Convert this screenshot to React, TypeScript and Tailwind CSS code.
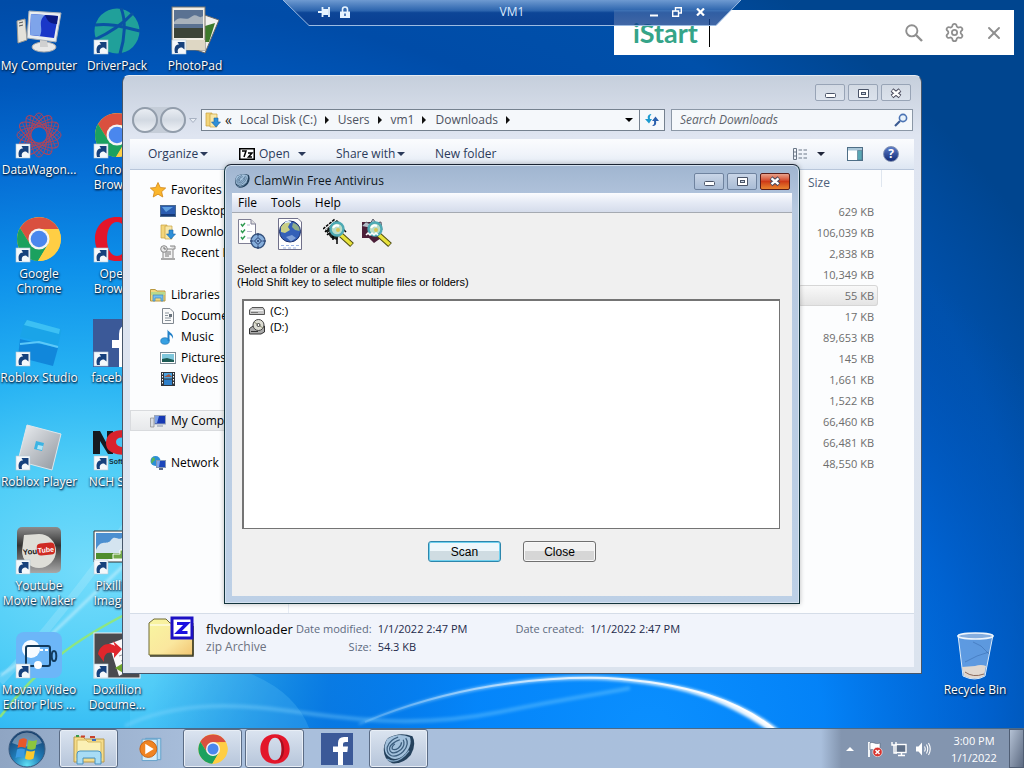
import React from "react";
import { Settings, X } from "lucide-react";

const UI = "font-['Open_Sans','Noto_Sans',sans-serif]";

function Wallpaper() {
  return (
    <svg className="absolute inset-0 h-full w-full" viewBox="0 0 1024 768" preserveAspectRatio="none" aria-hidden="true">
      <defs>
        <radialGradient id="sky" gradientUnits="userSpaceOnUse" cx="0" cy="0" r="1" gradientTransform="translate(90 570) scale(1050 760)">
          <stop offset="0" stopColor="#74dcfb" />
          <stop offset="0.14" stopColor="#4fcdf7" />
          <stop offset="0.26" stopColor="#26b2f3" />
          <stop offset="0.4" stopColor="#0d90ea" />
          <stop offset="0.52" stopColor="#0670d6" />
          <stop offset="0.64" stopColor="#0058bc" />
          <stop offset="0.75" stopColor="#004ca8" />
          <stop offset="0.88" stopColor="#0050aa" />
          <stop offset="1" stopColor="#00458f" />
        </radialGradient>
        <radialGradient id="glow" gradientUnits="userSpaceOnUse" cx="0" cy="0" r="1" gradientTransform="translate(650 740) scale(500 560)">
          <stop offset="0" stopColor="#0b90ff" />
          <stop offset="0.35" stopColor="#0485fb" stopOpacity="0.95" />
          <stop offset="0.65" stopColor="#0069de" stopOpacity="0.75" />
          <stop offset="1" stopColor="#0058c4" stopOpacity="0" />
        </radialGradient>
        <linearGradient id="swoosh" x1="0" x2="1">
          <stop offset="0" stopColor="#fff" stopOpacity="0.15" />
          <stop offset="0.5" stopColor="#fff" stopOpacity="0.7" />
          <stop offset="1" stopColor="#fff" />
        </linearGradient>
        <filter id="soft" x="-10%" y="-10%" width="120%" height="120%">
          <feGaussianBlur stdDeviation="1.5" />
        </filter>
      </defs>
      <rect width="1024" height="768" fill="url(#sky)" />
      <rect width="1024" height="768" fill="url(#glow)" />
      <path d="M200 660Q290 675 310 730H130V660Z" fill="#7fe0ff" opacity=".18" />
      <path d="M359 724C450 685 540 674 607 677C690 682 740 700 779 730L768 730C720 698 680 685 607 680C540 677 450 688 359 724Z" fill="url(#swoosh)" stroke="#9fe0ff" strokeOpacity=".5" filter="url(#soft)" />
      <path d="M365 722C450 686 540 676 607 678C690 683 740 702 774 729" fill="none" stroke="url(#swoosh)" strokeWidth="2" />
      <path d="M125 726C170 704 225 702 290 711S420 728 500 712S590 696 630 688" fill="none" stroke="#8fdcff" strokeWidth="4" opacity=".35" filter="url(#soft)" />
      <path d="M0 717C40 665 75 640 130 612" fill="none" stroke="#97e96c" strokeWidth="2.5" opacity=".85" />
      <path d="M0 675C30 660 75 610 130 560" fill="none" stroke="#fff" strokeWidth="2" opacity=".6" filter="url(#soft)" />
      <path d="M0 682C40 640 80 590 130 520" fill="none" stroke="#fff" strokeWidth="8" opacity=".15" />
    </svg>
  );
}

function ChromeArt() {
  return (
    <g>
      <circle cx="24" cy="23" r="22" fill="#fbd04b" />
      <path d="M5 12A22 22 0 0 1 43.5 13H24L15 28Z" fill="#d9503f" />
      <path d="M5 12A22 22 0 0 0 23 45L33 28H24L15 28Z" fill="#1ba15f" />
      <path d="M23 45L33.5 28L33 13H43.3A22 22 0 0 1 23 45Z" fill="#ffce44" />
      <circle cx="24" cy="23" r="10.5" fill="#f4f4f4" />
      <circle cx="24" cy="23" r="8.3" fill="#4a87ee" />
    </g>
  );
}

function OperaArt() {
  return (
    <g>
      <path fillRule="evenodd" fill="#e3162a" d="M24 1C10 1 2 11 2 23S10 45 24 45S46 35 46 23S38 1 24 1ZM24 6C30 6 34 13 34 23S30 40 24 40S14 33 14 23S18 6 24 6Z" />
      <path d="M28 5.500C40 8 42 38 28 40.500C36 36 36 10 28 5.500Z" fill="#a80f1e" />
    </g>
  );
}

type DeskItem = { name: string; lines: string[]; art: React.ReactNode; shortcut?: boolean };

const spiro = Array.from({ length: 6 }, (_, i) => i * 30);

const columns: DeskItem[][] = [
  [
    {
      name: "computer",
      lines: ["My Computer"],
      art: (
        <g>
          <path d="M2 13L10 11L12 32L3 35Z" fill="#e4e2da" stroke="#9a9a94" />
          <path d="M4 15L8 14M4 18L8 17" stroke="#555" />
          <ellipse cx="29" cy="39" rx="12" ry="5" fill="#e8e8e8" stroke="#aaa" />
          <path d="M25 31L32 32L33 39H25Z" fill="#d0d0d0" />
          <path d="M14 3L46 5L41 34L12 30Z" fill="#e9edf0" stroke="#a8b0b8" />
          <path d="M16 6L43 8L39 30L15 27Z" fill="#1a37c8" />
          <path d="M16 6L30 7C22 14 29 20 25 28L15 27Z" fill="#7ea4ea" />
          <path d="M30 7L43 8L42 16C34 16 32 12 30 7Z" fill="#0a1a82" />
        </g>
      ),
    },
    {
      name: "datawagon",
      lines: ["DataWagon..."],
      shortcut: true,
      art: (
        <g fill="none" stroke="#b0445a" strokeWidth="1">
          {spiro.map((a) => (
            <g key={a} transform={`rotate(${a} 24 23)`}>
              <ellipse cx="24" cy="23" rx="22" ry="8" />
              <path d="M4 15L24 12L44 15M4 31L24 34L44 31" strokeWidth=".7" />
            </g>
          ))}
        </g>
      ),
    },
    { name: "chrome", lines: ["Google", "Chrome"], shortcut: true, art: <ChromeArt /> },
    {
      name: "studio",
      lines: ["Roblox Studio"],
      shortcut: true,
      art: (
        <g>
          <path d="M12 0L45 9Q47 10 46 12L43 26L5 17L9 3Q10 0 12 0Z" fill="#1aa4e8" />
          <path d="M12 0L45 9L44 14L9 5Z" fill="#3cc0f4" />
          <path d="M5 19L43 28L38 46L3 37Z" fill="#1187db" />
          <path d="M5 24L24 22L43 27" stroke="#5cc8f8" fill="none" strokeWidth="2" />
        </g>
      ),
    },
    {
      name: "player",
      lines: ["Roblox Player"],
      shortcut: true,
      art: (
        <g>
          <defs>
            <linearGradient id="rbx" x1="0" y1="0" x2="1" y2="1">
              <stop offset="0" stopColor="#eef1f4" />
              <stop offset="1" stopColor="#8e949c" />
            </linearGradient>
          </defs>
          <path d="M12 1L46 10L37 46L3 37Z" fill="url(#rbx)" stroke="#dfe6ea" />
          <path d="M21 17L29 19L27 27L19 25Z" fill="#3bb4e4" />
          <path d="M23 21L28 22L27 26L22 25Z" fill="#b3e6f6" />
        </g>
      ),
    },
    {
      name: "youtube",
      lines: ["Youtube", "Movie Maker"],
      shortcut: true,
      art: (
        <g>
          <defs>
            <linearGradient id="ytb" x1="0" y1="0" x2="0" y2="1">
              <stop offset="0" stopColor="#8c8c8c" />
              <stop offset=".4" stopColor="#333" />
              <stop offset="1" stopColor="#a8a8a8" />
            </linearGradient>
          </defs>
          <rect x="2" y="-1" width="44" height="46" rx="5" fill="url(#ytb)" />
          <path d="M9 7L24 6A17 17 0 1 1 7 23Z" fill="#deded8" />
          <rect x="22" y="15" width="18" height="12" rx="4" fill="#cf2a22" transform="rotate(-5 31 22)" />
          <text x="8" y="27" fontSize="8" fontWeight="700" fontFamily="Liberation Sans" fill="#222" transform="rotate(-5 8 28)">You</text>
          <text x="23" y="25" fontSize="7" fontWeight="700" fontFamily="Liberation Sans" fill="#fff" transform="rotate(-5 23 26)">Tube</text>
        </g>
      ),
    },
    {
      name: "movavi",
      lines: ["Movavi Video", "Editor Plus ..."],
      shortcut: true,
      art: (
        <g>
          <rect x="1" y="0" width="46" height="46" rx="8" fill="#6cb6f8" />
          <circle cx="16" cy="17" r="9" fill="#fff" opacity=".95" />
          <rect x="11" y="14" width="24" height="20" rx="2" fill="none" stroke="#123a5c" strokeWidth="2" />
          <ellipse cx="39" cy="24" rx="2.3" ry="5" fill="none" stroke="#123a5c" strokeWidth="2" />
          <circle cx="23" cy="33" r="4" fill="#fff" />
          <path d="M25 18H33" stroke="#fff" strokeWidth="2" strokeDasharray="3 2" />
        </g>
      ),
    },
  ],
  [
    {
      name: "driverpack",
      lines: ["DriverPack"],
      shortcut: true,
      art: (
        <g>
          <circle cx="24" cy="23" r="22.5" fill="#20a09a" />
          <path d="M2 17C18 15 30 19 47 23M1 32C14 26 30 16 40 5M28 0C33 12 32 30 27 46" stroke="#0a52a4" strokeWidth="3" fill="none" />
        </g>
      ),
    },
    { name: "chromebrowser", lines: ["Chrome", "Browser"], shortcut: true, art: <ChromeArt /> },
    { name: "opera", lines: ["Opera", "Browser"], shortcut: true, art: <OperaArt /> },
    {
      name: "facebook",
      lines: ["facebook"],
      shortcut: true,
      art: (
        <g>
          <path d="M0 -1H48V47H0Z" fill="#3b5998" />
          <path d="M26 47V28H19V20H26V14Q26 5 35 5H42V13H37Q34 13 34 16V20H42L41 28H34V47Z" fill="#fff" />
        </g>
      ),
    },
    {
      name: "nch",
      lines: ["NCH Suite"],
      shortcut: true,
      art: (
        <g>
          <path d="M0 7H7L14 20V7H20V30H15L7 17V30H0Z" fill="#161a1f" />
          <path d="M34 6Q14 5 13 18T34 31V23Q23 24 23 18T34 14Z" fill="#d8232c" />
          <text x="16" y="40" fontSize="7" fontWeight="700" fontFamily="Liberation Sans" fill="#15303c">Software</text>
        </g>
      ),
    },
    {
      name: "pixillion",
      lines: ["Pixillion", "Image ..."],
      shortcut: true,
      art: (
        <g>
          <path d="M1 3H47V34H1Z" fill="#f5f8fa" stroke="#333" />
          <rect x="3" y="5" width="43" height="24" fill="#4b8fd0" />
          <path d="M3 22C8 10 14 18 18 12S26 14 30 9V26H3Z" fill="#d4e4f0" />
          <path d="M3 25H46V31H3Z" fill="#4f8d2d" />
          <path d="M20 26H27V22H40V31H20Z" fill="#74a94b" stroke="#fff" />
        </g>
      ),
    },
    {
      name: "doxillion",
      lines: ["Doxillion", "Docume..."],
      shortcut: true,
      art: (
        <g>
          <rect x="1" y="1" width="46" height="45" fill="#4a4a4e" stroke="#f0f0f0" />
          <path d="M16 12L40 3L44 34L26 44Z" fill="#fafafa" />
          <path d="M5 22C7 12 16 10 22 14L20 9L29 17L21 26L21 21C15 19 10 22 11 30Z" fill="#e0262c" />
          <path d="M22 36L32 30V42Z" fill="#6fa52c" />
          <path d="M26 24L38 20M28 29L38 26" stroke="#999" />
        </g>
      ),
    },
  ],
  [
    {
      name: "photopad",
      lines: ["PhotoPad"],
      shortcut: true,
      art: (
        <g>
          <path d="M28 5L48 12L34 45L14 38Z" fill="#f0f0ee" stroke="#666" />
          <path d="M34 18L44 15L38 34H33Z" fill="#3c7a2c" />
          <rect x="1" y="-1" width="33" height="43" fill="#f1eee6" stroke="#77756c" />
          <rect x="3" y="2" width="29" height="28" fill="#5a7292" />
          <path d="M3 14C9 6 14 14 20 9S28 12 32 8V16H3Z" fill="#a8b2bc" />
          <path d="M3 20H32V30H3Z" fill="#3c4438" />
          <path d="M1 32H34V42H1Z" fill="#ded7c4" />
        </g>
      ),
    },
  ],
];

function ShortcutMark() {
  return (
    <g>
      <rect x="1" y="32" width="14" height="14" fill="#f4f8fb" stroke="#b5c9d8" strokeWidth=".6" />
      <path d="M4 45C2.5 39 5 36.500 8 36.500L6.500 34H13.500V41.500L11 39.500C8 39.500 6 41 7 45Z" fill="#16417c" />
    </g>
  );
}

function DesktopIcon({ item }: { item: DeskItem }) {
  return (
    <button type="button" className="flex h-[104px] w-[78px] flex-col items-center overflow-hidden pt-2">
      <svg viewBox="0 0 48 48" className="h-12 w-12 shrink-0 overflow-visible" aria-hidden="true">
        {item.art}
        {item.shortcut && <ShortcutMark />}
      </svg>
      <span className="mt-[2px] text-center text-[12px] leading-[15px] whitespace-nowrap text-white [text-shadow:0_1px_2px_#001c3c,1px_1px_2px_#002850]">
        {item.lines.map((l) => (
          <span key={l} className="block">{l}</span>
        ))}
      </span>
    </button>
  );
}

function Caret({ className = "" }: { className?: string }) {
  return (
    <svg viewBox="0 0 8 4" className={`h-1 w-2 shrink-0 ${className}`} aria-hidden="true">
      <path d="M0 0H8L4 4Z" fill="currentColor" />
    </svg>
  );
}

function WindowButtons({ active }: { active?: boolean }) {
  const base = active
    ? "border-[#6f839f] bg-linear-to-b from-[#c9d6e8] via-[#b9c8dd] to-[#a9bcd6]"
    : "border-[#98a4b6] bg-linear-to-b from-[#d3dae4] to-[#dbe2ec]";
  const close = active
    ? "border-[#5a1c18] bg-linear-to-b from-[#e9a08a] via-[#cf3a18] to-[#e8822e]"
    : base;
  return (
    <div className="flex gap-[3px]">
      <button type="button" aria-label="Minimize" className={`flex h-[17px] w-[30px] items-center justify-center rounded-[2px] border ${base}`}>
        <svg viewBox="0 0 16 12" className="h-3 w-4"><rect x="3.500" y="6.500" width="10" height="4" rx="1" fill="#fff" stroke="#4a5468" /></svg>
      </button>
      <button type="button" aria-label="Maximize" className={`flex h-[17px] w-[30px] items-center justify-center rounded-[2px] border ${base}`}>
        <svg viewBox="0 0 16 12" className="h-3 w-4"><path d="M3.500 2.500H13.500V10.500H3.500Z" fill="#fff" stroke="#4a5468" /><rect x="6.500" y="5.500" width="4" height="2" fill="#c9d3e2" stroke="#4a5468" /></svg>
      </button>
      <button type="button" aria-label="Close" className={`flex h-[17px] w-[30px] items-center justify-center rounded-[2px] border ${close}`}>
        <svg viewBox="0 0 16 12" className="h-3 w-4">
          <path d="M4 3L12 9.500M12 3L4 9.500" stroke="#4a4a5c" strokeWidth="4.200" />
          <path d="M4.500 3.300L11.500 9.200M11.500 3.300L4.500 9.200" stroke="#fff" strokeWidth="2.400" />
        </svg>
      </button>
    </div>
  );
}

function FolderDown() {
  return (
    <g>
      <path d="M1 1H7V14H1Z" fill="#f3d57a" stroke="#c9a040" strokeWidth=".7" />
      <path d="M5 2H12V15H5Z" fill="#f8e7a8" stroke="#c9a040" strokeWidth=".7" />
      <path d="M9 6H13V10H15.500L11 15L6.500 10H9Z" fill="#2e8fd8" stroke="#1a65a8" strokeWidth=".6" />
    </g>
  );
}

const sideIcons: Record<string, React.ReactNode> = {
  star: <path d="M8 .5L10.300 5.500L15.700 6L11.600 9.700L12.800 15L8 12.200L3.200 15L4.400 9.700L.3 6L5.700 5.500Z" fill="#fbb62c" stroke="#d08518" strokeWidth=".8" />,
  desktop: (
    <g><rect x=".5" y="2.500" width="15" height="11" fill="#2a5cb0" stroke="#4a6a90" /><path d="M2 4H13L6 9Z" fill="#5fa0e0" /><path d="M1 11H15V13H1Z" fill="#173a78" /></g>
  ),
  downloads: <FolderDown />,
  recent: (
    <g><path d="M3 4H13V14H3Z" fill="#f2f2f2" stroke="#888" /><path d="M5 7H11M5 9H11M5 11H9" stroke="#777" /><circle cx="4" cy="4" r="3.300" fill="#e8e8e8" stroke="#888" /><path d="M4 2V4H6" stroke="#555" fill="none" strokeWidth=".8" /><path d="M10 1H15V4H13" fill="#ddd" stroke="#888" /><path d="M1 13H15V15H1Z" fill="#aaa" /></g>
  ),
  libraries: (
    <g><path d="M.5 2.500H5L7 4H15V14H.5Z" fill="#f0d880" stroke="#b89840" /><path d="M1 5H15V8H1Z" fill="#b9d98c" /><path d="M3 14V8H13V14H11V11H5V14Z" fill="#74bdec" stroke="#3d86bd" strokeWidth=".7" /></g>
  ),
  documents: (
    <g><path d="M2.500.5H10L13.500 4V15.500H2.500Z" fill="#fafafa" stroke="#808890" /><path d="M5 5H9M5 7.500H8M5 10H11M5 12.500H11" stroke="#8a949c" /><path d="M9 6H12V9H9Z" fill="#69737d" /></g>
  ),
  music: (
    <g><ellipse cx="5" cy="12" rx="4.300" ry="3.300" fill="#36a0e2" stroke="#1a6cab" strokeWidth=".6" /><path d="M7.500 12V.5C9 4 14 4 13 10C12 6.500 10 6 9.500 5.500V12Z" fill="#2381c8" /></g>
  ),
  pictures: (
    <g><rect x=".5" y="2.500" width="15" height="11" fill="#fff" stroke="#7d8c96" /><rect x="2" y="4" width="12" height="8" fill="#7fc7dc" /><path d="M2 9L7 8L14 10V12H2Z" fill="#1d5b54" /></g>
  ),
  videos: (
    <g><rect x="1" y="1" width="14" height="14" fill="#30343a" /><rect x="4" y="2" width="8" height="5.500" fill="#4aa3e0" /><rect x="4" y="8.500" width="8" height="5.500" fill="#2f7fc8" /><path d="M4 6L9 3L12 6Z" fill="#9a5a4a" /><path d="M2.500 2V14M13.500 2V14" stroke="#fff" strokeDasharray="1.500 1.500" /></g>
  ),
  computer: (
    <g><path d="M.5 5H4V14H.5Z" fill="#d8dce2" stroke="#888" strokeWidth=".7" /><rect x="4.500" y="2.500" width="11" height="8.500" fill="#1739b4" stroke="#9aa6b8" /><path d="M5 3H9L7 10H5Z" fill="#7ba0e8" /><path d="M7 12H13V14H7Z" fill="#b7bfca" /></g>
  ),
  network: (
    <g><circle cx="5.500" cy="6" r="5" fill="#2c8fd6" /><path d="M2 3C5 1 6 5 4 6S3 9 1 8Z" fill="#59b457" /><rect x="6.500" y="5.500" width="9" height="7" fill="#1b46bb" stroke="#8397b5" /><path d="M7 6H10L9 12H7Z" fill="#7fa6ea" /><path d="M9 13H13V15H9Z" fill="#5a6a8a" /></g>
  ),
};

type SideRow = { label: string; icon: string; child?: boolean; selected?: boolean } | null;
const sideRows: SideRow[] = [
  { label: "Favorites", icon: "star" },
  { label: "Desktop", icon: "desktop", child: true },
  { label: "Downloads", icon: "downloads", child: true },
  { label: "Recent Places", icon: "recent", child: true },
  null,
  { label: "Libraries", icon: "libraries" },
  { label: "Documents", icon: "documents", child: true },
  { label: "Music", icon: "music", child: true },
  { label: "Pictures", icon: "pictures", child: true },
  { label: "Videos", icon: "videos", child: true },
  null,
  { label: "My Computer", icon: "computer", selected: true },
  null,
  { label: "Network", icon: "network" },
];

const sizes = ["629 KB", "106,039 KB", "2,838 KB", "10,349 KB", "55 KB", "17 KB", "89,653 KB", "145 KB", "1,661 KB", "1,522 KB", "66,460 KB", "66,481 KB", "48,550 KB"];

function Crumb({ children }: { children: string }) {
  return (
    <button type="button" className="flex items-center gap-2 whitespace-nowrap">
      {children}
      <svg viewBox="0 0 4 8" className="h-2 w-1"><path d="M0 0L4 4L0 8Z" fill="#111" /></svg>
    </button>
  );
}

function Explorer() {
  return (
    <section aria-label="Downloads" className="absolute top-[75px] left-[122px] flex h-[599px] w-[800px] flex-col rounded-t-[7px] border border-[#47566a] border-t-[#e6ebf2] bg-linear-to-b from-[#c6cfdc] via-[#dfe5f1] via-10% to-[#dbe3ee] px-[7px] pb-[6px]">
      <header className="flex h-[33px] shrink-0 justify-end pt-2 pr-[3px]">
        <WindowButtons />
      </header>
      <div className="flex h-[22px] shrink-0 items-center pr-px pl-[2px]">
        <div className="flex gap-[2px] rounded-full bg-[#c5cdd8]">
          {["Back", "Forward"].map((n) => (
            <button key={n} type="button" aria-label={n} className="h-[26px] w-[26px] rounded-full border-2 border-[#929dab] bg-linear-to-b from-[#e9edf3] via-[#d2d9e2] to-[#eef1f6]" />
          ))}
        </div>
        <svg viewBox="0 0 8 5" className="ml-[3px] h-[5px] w-2"><path d="M.5.5H7.500L4 4.500Z" fill="#e8edf4" stroke="#a8b2c2" /></svg>
        <div className="ml-1 flex h-[22px] flex-1 items-center border border-[#75818f] bg-[#f5f8fb] text-[#4c5260]">
          <svg viewBox="0 0 16 16" className="ml-[3px] h-4 w-4"><FolderDown /></svg>
          <span className="ml-1 text-[14px] leading-[16px] text-[#222]">«</span>
          <div className="ml-2 flex flex-1 gap-[9px]">
            <Crumb>Local Disk (C:)</Crumb>
            <Crumb>Users</Crumb>
            <Crumb>vm1</Crumb>
            <Crumb>Downloads</Crumb>
          </div>
          <Caret className="mr-[6px] text-black" />
          <button type="button" aria-label="Refresh" className="flex h-full w-[25px] items-center justify-center border-l border-[#75818f]">
            <svg viewBox="0 0 16 14" className="h-[14px] w-4"><path d="M6.500 1C3.500 2 3.500 4 4 6H1L5 10.500L8 6H6C5.500 4 6 2.500 7.500 1.500Z" fill="#1c9bd0" /><path d="M8 13C12 13 12.500 11 12 8H15L11.500 3.500L8 8H10C10.500 10 10 12 8 13Z" fill="#2a5fae" /></svg>
          </button>
        </div>
        <label className="ml-[6px] flex h-[22px] w-[242px] items-center border border-[#8b97a6] bg-[#f5f8fb] pr-1 pl-2">
          <input aria-label="Search Downloads" placeholder="Search Downloads" className="min-w-0 flex-1 bg-transparent italic outline-none placeholder:text-[#5d636c]" />
          <svg viewBox="0 0 14 14" className="h-[14px] w-[14px]"><path d="M1 13L6 8" stroke="#3b5a92" strokeWidth="2.200" /><circle cx="9" cy="5" r="3.600" fill="#e9f3fb" stroke="#4c74b4" strokeWidth="1.600" /></svg>
        </label>
      </div>
      <div className="mt-2 flex h-[31px] shrink-0 items-center border-b border-[#b8c6da] bg-linear-to-b from-[#fbfcfe] via-[#f0f4fa] to-[#dde6f2] text-[#2b3a5a]">
        <button type="button" className="flex w-[91px] items-center gap-[2px] pl-[18px] whitespace-nowrap">Organize <Caret /></button>
        <button type="button" className="ml-[18px] flex w-[97px] items-center gap-1 whitespace-nowrap">
          <svg viewBox="0 0 16 12" className="h-3 w-4"><rect x=".75" y=".75" width="14.500" height="10.500" fill="#fff" stroke="#000" strokeWidth="1.500" /><path d="M3 3H7L5 9M9 5H13L9.500 9H13" fill="none" stroke="#000" strokeWidth="1.500" /></svg>
          Open <Caret className="ml-1" />
        </button>
        <button type="button" className="flex w-[99px] items-center gap-[2px] whitespace-nowrap">Share with <Caret /></button>
        <button type="button" className="whitespace-nowrap">New folder</button>
        <div className="flex-1" />
        <button type="button" aria-label="Views" className="flex items-center gap-[9px] text-[#20263a]">
          <svg viewBox="0 0 16 14" className="h-[14px] w-4" fill="none" stroke="#6a7686"><path d="M1.500 1.500H4.500V12.500H1.500ZM1.500 5H4.500M1.500 9H4.500" /><path d="M6.500 3H10M11.500 3H15M6.500 7H10M11.500 7H15M6.500 11H10M11.500 11H15" /></svg>
          <Caret />
        </button>
        <button type="button" aria-label="Preview pane" className="ml-[22px]">
          <svg viewBox="0 0 16 14" className="h-[14px] w-4"><rect x=".5" y=".5" width="15" height="13" fill="#fff" stroke="#4e6e86" /><path d="M1 1H15V3.500H1Z" fill="#a9c6d8" /><path d="M10.500 3.500H15V13H10.500Z" fill="#5aa7b4" stroke="#4e6e86" strokeWidth=".6" /></svg>
        </button>
        <button type="button" aria-label="Help" className="mr-[15px] ml-5 flex h-4 w-4 items-center justify-center rounded-full border border-[#7f8fb0] bg-linear-to-b from-[#5c7cc8] to-[#152c78] text-[12px] leading-[14px] font-bold text-white">?</button>
      </div>
      <div className="flex min-h-0 flex-1 bg-[#fcfdfe]">
        <nav className="flex w-[159px] shrink-0 flex-col border-r border-[#e6ecf4] pt-[9px] text-black">
          {sideRows.map((r, i) =>
            r ? (
              <a
                key={r.label}
                href="#"
                className={`flex h-[21px] shrink-0 items-center gap-[5px] whitespace-nowrap ${r.child ? "pl-[30px]" : "pl-5"} ${r.selected ? "bg-linear-to-b from-[#f6f7f8] to-[#e6e8ea] outline outline-[#d9dbde] -outline-offset-1" : ""}`}
              >
                <svg viewBox="0 0 16 16" className="h-4 w-4 shrink-0" aria-hidden="true">{sideIcons[r.icon]}</svg>
                {r.label}
              </a>
            ) : (
              <div key={i} className="h-[21px] shrink-0" />
            ),
          )}
        </nav>
        <div className="flex flex-1 justify-end">
          <table className="w-[80px] self-start text-[11px] text-[#6d6d6d]">
            <thead>
              <tr><th className="h-[31px] pb-[5px] pl-[10px] text-left text-[12px] font-normal text-[#4c607a]">Size</th></tr>
            </thead>
            <tbody>
              {sizes.map((s) => (
                <tr key={s}>
                  <td className={`h-[21px] pr-1 text-right leading-[17px] whitespace-nowrap ${s === "55 KB" ? "rounded-[3px] bg-linear-to-b from-[#fafafa] to-[#e3e3e3] outline outline-[#d6d6d6] -outline-offset-1" : ""}`}>{s}</td>
                </tr>
              ))}
            </tbody>
          </table>
          <div className="mr-8 h-[17px] w-1 border-r border-[#dfe6ef]" />
        </div>
      </div>
      <footer className="flex h-[54px] shrink-0 border-t border-[#d5dde8] bg-[#f1f4fb] pt-[2px] pl-[18px] leading-[18px]">
        <svg viewBox="0 0 46 42" className="h-[42px] w-[46px]" aria-hidden="true">
          <defs>
            <linearGradient id="zipf" x1="0" y1="0" x2="1" y2="1"><stop offset="0" stopColor="#f8f6a0" /><stop offset=".6" stopColor="#fae79e" /><stop offset="1" stopColor="#f2c572" /></linearGradient>
          </defs>
          <path d="M1 39V7L6 3H18L22 7H45V39Z" fill="url(#zipf)" stroke="#6e6a35" />
          <path d="M2 40H45V10" fill="none" stroke="#3a3820" strokeWidth="1.500" />
          <path d="M2 9H22" stroke="#fff" />
          <rect x="24" y="2" width="20" height="20" fill="#fff" stroke="#1c10c4" strokeWidth="3" />
          <path d="M29 7.500H39L30 16.500H39.500" fill="none" stroke="#1c10e0" strokeWidth="3.200" />
        </svg>
        <div className="ml-3 w-[86px] pt-1">
          <div className="text-[13px] whitespace-nowrap text-black">flvdownloader</div>
          <div className="text-[#6c7280]">zip Archive</div>
        </div>
        <dl className="ml-1 grid grid-cols-[auto_auto] content-start gap-x-[6px] pt-1 text-[11px] whitespace-nowrap text-[#1e2a4a]">
          <dt className="text-right text-[#5d6a80]">Date modified:</dt><dd>1/1/2022 2:47 PM</dd>
          <dt className="text-right text-[#5d6a80]">Size:</dt><dd>54.3 KB</dd>
        </dl>
        <dl className="ml-12 flex gap-[6px] pt-1 text-[11px] whitespace-nowrap text-[#1e2a4a]">
          <dt className="text-[#5d6a80]">Date created:</dt><dd>1/1/2022 2:47 PM</dd>
        </dl>
      </footer>
    </section>
  );
}

function ClamArt() {
  return (
    <g>
      <path d="M8 5Q22 -3 37 3Q42 13 35 25Q26 36 13 35Q2 30 3 17Q4 9 8 5Z" fill="#24415c" />
      <path d="M7 6Q20 -2 34 4Q37 13 29 23Q21 32 12 29Q3 25 4 15Q5 9 7 6Z" fill="#a3c1dc" />
      <g fill="none" stroke="#3c5e7e" strokeWidth="1.500">
        <path d="M29 5Q34 12 26 21Q19 28 12 26Q6 23 7 16Q10 7 20 4" />
        <path d="M26 7Q29 13 23 19Q17 24 12 22Q8 19 11 14Q15 9 22 7" />
        <path d="M24 10Q24 14 20 17Q16 20 13 18Q12 15 16 12" />
      </g>
      <path d="M7 30Q19 38 33 20" fill="none" stroke="#86a9c8" strokeWidth="1.500" />
    </g>
  );
}

function Magnifier() {
  return (
    <g>
      <path d="M18 17L29 27" stroke="#4c4a10" strokeWidth="5.500" />
      <path d="M18 17L28.500 26.500" stroke="#e8e23c" strokeWidth="3.500" />
      <circle cx="14" cy="11" r="6.500" fill="#b9dcc8" stroke="#4eaab4" strokeWidth="2.400" />
      <path d="M10 10Q12 6 16 8" stroke="#fff" strokeWidth="2" fill="none" />
      <circle cx="15" cy="12" r="2" fill="#d8c454" />
    </g>
  );
}

function ClamWin() {
  return (
    <section aria-label="ClamWin Free Antivirus" className="absolute top-[164px] left-[224px] flex h-[440px] w-[576px] flex-col rounded-t-[7px] border border-[#13343c] border-t-[#1b2433] bg-linear-to-b from-[#a0b5d0] via-[#b7c9e0] via-10% to-[#bdd0e6] px-[7px] pb-[7px] shadow-[inset_0_0_0_1px_#d5e2f0,0_0_5px_#0004]">
      <header className="flex h-7 shrink-0 items-center gap-1 pt-1 pr-[2px] pl-[2px] text-[#101820]">
        <svg viewBox="0 0 40 36" className="h-4 w-4" aria-hidden="true"><ClamArt /></svg>
        <h1 className="flex-1">ClamWin Free Antivirus</h1>
        <WindowButtons active />
      </header>
      <div className="flex flex-1 flex-col bg-[#f0f0f0]">
        <nav className="flex h-5 shrink-0 items-center gap-[14px] border-b border-[#a5aab2] bg-linear-to-b from-[#fbfcfe] via-[#e5eaf5] to-[#d5dceb] pl-[6px] text-black">
          <button type="button">File</button>
          <button type="button">Tools</button>
          <button type="button">Help</button>
        </nav>
        <div className="flex items-start pt-[5px] pl-1">
          <button type="button" aria-label="Preferences">
            <svg viewBox="0 0 32 32" className="h-8 w-8">
              <path d="M2.500 1.500H15L19.500 6V25.500H2.500Z" fill="#fdfdfe" stroke="#7f7f94" />
              <path d="M15 1.500V6H19.500" fill="#ddd" stroke="#7f7f94" />
              <path d="M5 6L6.500 8L9 5M5 12.500L6.500 14.500L9 11.500M5 19L6.500 21L9 18" stroke="#2e9a50" strokeWidth="1.400" fill="none" />
              <path d="M11 7H14M11 13.500H16M11 20H15" stroke="#b5b5cc" />
              <circle cx="22" cy="23" r="7" fill="#86aedb" stroke="#34527e" strokeWidth="1.300" />
              <path d="M22 15V18.500M22 27.500V31M14 23H17.500M26.500 23H30M22 19.500L25.500 23L22 26.500L18.500 23Z" stroke="#1f3668" fill="none" />
              <circle cx="22" cy="23" r="1" fill="#1f3668" />
            </svg>
          </button>
          <button type="button" aria-label="Internet update" className="ml-2">
            <svg viewBox="0 0 32 32" className="h-8 w-8">
              <path d="M2.500.5H22L25.500 4V31.500H2.500Z" fill="#fdfdfe" stroke="#70708a" />
              <circle cx="14" cy="13.500" r="10.500" fill="#3460b8" stroke="#182c68" />
              <path d="M5 9C8 4 12 3 14 5L12 9L14 12L9 15L5 14Z" fill="#c9cf86" />
              <path d="M17 5C22 6 24 10 23.500 13L19 12L16 9Z" fill="#8fae88" />
              <path d="M10 19L16 17L20 20L15 23.500Z" fill="#7fa0d8" />
              <path d="M9 5Q12 3 15 4.500" stroke="#dff2ff" strokeWidth="1.500" fill="none" />
              <path d="M5 27.500H23M7 30H20" stroke="#9cb4e4" strokeDasharray="3 2" />
            </svg>
          </button>
          <button type="button" aria-label="Scan memory" className="ml-[15px]">
            <svg viewBox="0 0 32 32" className="h-8 w-8">
              <path d="M2 12L14 2L20 8L14 22L8 20Z" fill="#1e2420" />
              <path d="M0 11L12 1M2 14L14 3M4 17L16 6" stroke="#000" strokeDasharray="3 1" strokeWidth="1.500" />
              <path d="M14 20V26M10 18V22M18 9L23 14" stroke="#000" strokeWidth="1.500" />
              <path d="M3 12L13 4M5 15L9 12" stroke="#d9dde0" strokeDasharray="2 1.500" />
              <Magnifier />
            </svg>
          </button>
          <button type="button" aria-label="Scan files" className="ml-[6px]">
            <svg viewBox="0 0 32 32" className="h-8 w-8">
              <path d="M1 4H20V20L13 25L8 20H1Z" fill="#4b1f38" />
              <path d="M1 8L5 4L9 6L12 1L15 5L20 4L21 12" fill="#b8bcc8" stroke="#5c5c68" />
              <Magnifier />
              <path d="M5 17L7 15L9 17L11 15L13 17L15 15L17 17" stroke="#fff" fill="none" strokeWidth="1.500" />
            </svg>
          </button>
        </div>
        <p id="drives-label" className="mt-[13px] pl-[5px] font-['Liberation_Sans',Arial,sans-serif] text-[11px] leading-[13px] text-black">
          Select a folder or a file to scan
          <br />
          (Hold Shift key to select multiple files or folders)
        </p>
        <ul aria-labelledby="drives-label" className="mt-[10px] mr-3 ml-[10px] h-[230px] border-t-2 border-r border-b border-l-2 border-[#747474] bg-white pt-[2px] pl-[5px] font-['Liberation_Sans',Arial,sans-serif] text-[11px] leading-[16px] text-black">
          <li className="flex items-center gap-[5px]">
            <svg viewBox="0 0 16 16" className="h-4 w-4"><path d="M.5 7L3 4.500H14L15.500 7V11.500H.5Z" fill="#c4c4c4" stroke="#555" /><path d="M2 7.500H14" stroke="#f5f5f5" /><path d="M2 9.500H9" stroke="#777" /></svg>
            (C:)
          </li>
          <li className="flex items-center gap-[5px]">
            <svg viewBox="0 0 16 16" className="h-4 w-4"><path d="M.5 9.500L4 7H15.500V13L12 15H.5Z" fill="#a8a8a8" stroke="#333" /><circle cx="9.500" cy="6" r="5.500" fill="#dcdcd2" stroke="#444" /><path d="M5 3L14 9" stroke="#8a8a70" /><circle cx="9.500" cy="6" r="1.500" fill="#fff" stroke="#333" /><path d="M2 12.500H9" stroke="#333" /></svg>
            (D:)
          </li>
        </ul>
        <div className="mt-3 flex justify-center gap-[22px] font-['Liberation_Sans',Arial,sans-serif] text-[12px] text-black">
          <button type="button" className="h-[21px] w-[73px] rounded-[3px] border border-[#2d86ac] bg-linear-to-b from-[#eef7fb] from-50% to-[#cfdce2] to-50% shadow-[inset_0_0_0_1px_#6fd0ee]">Scan</button>
          <button type="button" className="h-[21px] w-[73px] rounded-[3px] border border-[#707070] bg-linear-to-b from-[#f2f2f2] from-50% to-[#d6d6d6] to-50% shadow-[inset_0_0_0_1px_#f8f8f8]">Close</button>
        </div>
      </div>
    </section>
  );
}

function SearchPanel() {
  return (
    <aside className="absolute top-[10px] right-[10px] flex h-[45px] w-[400px] items-center bg-white pl-[19px] text-[#8f8f8f]">
      <span className="font-['Lato',sans-serif] text-[27px] leading-[42px] font-bold text-[#35a488]">iStart</span>
      <input aria-label="Search the web" className="ml-[11px] h-[28px] min-w-0 flex-1 border-l border-black bg-transparent outline-none" />
      <button type="button" aria-label="Search" className="mr-[21px]">
        <svg viewBox="0 0 18 18" className="h-[18px] w-[18px]" fill="none" stroke="currentColor"><circle cx="6.800" cy="6.800" r="5.600" strokeWidth="1.900" /><path d="M11 11L17 17" strokeWidth="2.400" /></svg>
      </button>
      <button type="button" aria-label="Settings" className="mr-[19px]"><Settings className="h-[21px] w-[21px]" strokeWidth={2} /></button>
      <button type="button" aria-label="Close panel" className="mr-[10px]"><X className="h-5 w-5" strokeWidth={2.3} /></button>
    </aside>
  );
}

function ConnectionBar() {
  return (
    <div className="absolute top-0 left-[283px] h-[26px] w-[458px]">
      <svg viewBox="0 0 458 26" className="absolute inset-0 h-full w-full" aria-hidden="true">
        <defs>
          <linearGradient id="bar" x1="0" y1="0" x2="0" y2="1">
            <stop offset="0" stopColor="#719cd2" stopOpacity=".98" />
            <stop offset=".42" stopColor="#2f66ae" stopOpacity=".94" />
            <stop offset=".5" stopColor="#0f4494" stopOpacity=".86" />
            <stop offset="1" stopColor="#0c3c8c" stopOpacity=".78" />
          </linearGradient>
        </defs>
        <path d="M0 0H458L433 25.500H26Z" fill="url(#bar)" />
        <path d="M0 0L26 25.500H433L458 0" fill="none" stroke="#9cbbe2" />
      </svg>
      <div className="relative flex h-6 items-center pr-9 pl-[35px] text-white">
        <button type="button" aria-label="Pin"><svg viewBox="0 0 12 10" className="h-[10px] w-3"><path d="M0 5H4M4.500 0V10M5 3H10M5 7H10M5 5H10M11 0V10" stroke="#e6f3ff" strokeWidth="1.800" /></svg></button>
        <svg viewBox="0 0 10 12" className="ml-[10px] h-3 w-[10px]"><path d="M2.500 6V3.500A2.500 2.500 0 0 1 7.500 3.500V6" fill="none" stroke="#e6f3ff" strokeWidth="1.600" /><path d="M0 5.500H10V12H0Z" fill="#e6f3ff" /><path d="M5 7.500V10" stroke="#245aa4" strokeWidth="1.500" /></svg>
        <span className="ml-6 flex-1 text-center text-[#dceaff]">VM1</span>
        <button type="button" aria-label="Minimize session"><svg viewBox="0 0 8 10" className="h-[10px] w-2"><path d="M0 8.500H8" stroke="#fff" strokeWidth="2" /></svg></button>
        <button type="button" aria-label="Restore session" className="ml-[14px]"><svg viewBox="0 0 10 10" className="h-[10px] w-[10px]" fill="none" stroke="#fff" strokeWidth="1.400"><path d="M.7 4H6.500V9.300H.7ZM3.500 3.500V.8H9.300V6H7" /></svg></button>
        <button type="button" aria-label="Close session" className="ml-[14px]"><svg viewBox="0 0 9 8" className="h-2 w-[9px]"><path d="M1 .5L8 7.500M8 .5L1 7.500" stroke="#fff" strokeWidth="2.200" /></svg></button>
      </div>
    </div>
  );
}

const tasks: { name: string; open?: boolean; box: string; art: React.ReactNode }[] = [
  {
    name: "Windows Explorer",
    open: true,
    box: "0 0 32 30",
    art: (
      <g>
        <path d="M1 3H10L12 5H31V28H1Z" fill="#f5dc8a" stroke="#b8994a" />
        <path d="M4 6H13L15 8H28V24H4Z" fill="#fbf0b4" stroke="#d6ba62" />
        <path d="M17 3H22M8 2.500H12" stroke="#c8422c" strokeWidth="2" /><path d="M3 2H6" stroke="#3a9a4a" strokeWidth="2" />
        <path d="M19 6H23" stroke="#3b6ec0" strokeWidth="2" />
        <path d="M4 30V20Q4 17 7 17H25Q28 17 28 20V30H22V24H10V30Z" fill="#a8dcf5" stroke="#4a93c0" />
      </g>
    ),
  },
  {
    name: "Media Player",
    box: "-4 -2 36 30",
    art: (
      <g>
        <path d="M8 1H25V25H8Z" fill="#b7dcf2" stroke="#5e9dc8" /><path d="M4 2H21V26H4Z" fill="#d4ecf8" stroke="#5e9dc8" />
        <circle cx="11" cy="13" r="9.500" fill="#f08422" stroke="#c25f12" /><path d="M7.500 7L17 13L7.500 19Z" fill="#fff" />
      </g>
    ),
  },
  { name: "Chrome", open: true, box: "0 -1 48 48", art: <ChromeArt /> },
  { name: "Opera", open: true, box: "0 -1 48 48", art: <OperaArt /> },
  {
    name: "Facebook",
    box: "0 0 32 32",
    art: (
      <g>
        <rect width="32" height="32" fill="#3b5998" />
        <path d="M17 32V19H12V13.500H17V10Q17 4 23 4H27V9H24.500Q22 9 22 11V13.500H27L26.300 19H22V32Z" fill="#fff" />
      </g>
    ),
  },
  { name: "ClamWin", open: true, box: "2 0 38 36", art: <ClamArt /> },
];

function Taskbar() {
  return (
    <footer className="relative flex h-10 shrink-0 items-stretch border-t border-[#4a6a88] bg-linear-to-r from-[#8fa5c3] via-[#a9bfdc] via-20% to-[#a9bfdc]">
      <button type="button" aria-label="Start" className="flex w-[59px] items-center pl-2">
        <svg viewBox="0 0 38 38" className="h-[38px] w-[38px]" aria-hidden="true">
          <defs>
            <radialGradient id="orb" cx=".5" cy=".95" r=".9"><stop offset="0" stopColor="#5fe0f4" /><stop offset=".45" stopColor="#1f7cb8" /><stop offset="1" stopColor="#17406f" /></radialGradient>
          </defs>
          <circle cx="19" cy="19" r="18" fill="url(#orb)" stroke="#38597e" />
          <path d="M4 13A16 16 0 0 1 34 13Q19 20 4 13Z" fill="#fff" opacity=".35" />
          <path d="M11 10Q15 7 19 9.500L17.500 18Q13 16 9.500 18Z" fill="#e8582a" />
          <path d="M20.500 10Q24 12 29 10L27.500 18.500Q23 21 19 18.500Z" fill="#8cc63e" />
          <path d="M9 19.500Q13 17.500 17 19.500L15.500 28Q11.500 26 7.500 28Z" fill="#3a9ae2" />
          <path d="M18.500 20.500Q23 22.500 27 20.500L25.500 28.500Q21 31 17 28.500Z" fill="#fbc92e" />
        </svg>
      </button>
      <div className="flex flex-1 gap-[3px]">
        {tasks.map((t) => (
          <button
            key={t.name}
            type="button"
            aria-label={t.name}
            className={`flex w-[59px] items-center justify-center ${t.open ? "rounded-[3px] border border-[#5b6c85] bg-linear-to-b from-[#dbe4f0] to-[#b6c5da] shadow-[inset_0_0_0_1px_#e8eef6]" : ""}`}
          >
            <svg viewBox={t.box} className="h-8 w-8" aria-hidden="true">{t.art}</svg>
          </button>
        ))}
      </div>
      <div className="flex items-center bg-linear-to-r from-[#a9bfdc] to-[#8395af] to-10% pl-[25px]">
        <svg viewBox="0 0 8 4" className="h-1 w-2"><path d="M0 4H8L4 0Z" fill="#fff" /></svg>
        <svg viewBox="0 0 16 16" className="ml-[13px] h-4 w-4"><path d="M2 1V16" stroke="#fff" strokeWidth="1.800" /><path d="M3 2C6 0 8 4 13 2V9C8 11 6 7 3 9Z" fill="#fff" stroke="#44546a" strokeWidth=".5" /><circle cx="10.500" cy="11" r="4.700" fill="#d8322c" stroke="#fff" strokeWidth=".6" /><path d="M8.500 9L12.500 13M12.500 9L8.500 13" stroke="#fff" strokeWidth="1.500" /></svg>
        <svg viewBox="0 0 16 16" className="ml-2 h-4 w-4"><rect x="5" y="3.500" width="10" height="8" fill="#5f7088" stroke="#fff" strokeWidth="1.400" /><path d="M7 14.500H14M10.500 12V14" stroke="#fff" strokeWidth="1.400" /><path d="M1 1V4H5V1M3 4V12H6" fill="none" stroke="#fff" strokeWidth="1.400" /></svg>
        <svg viewBox="0 0 16 16" className="ml-2 h-4 w-4"><path d="M1 5.500H3.500L7 1.500V14.500L3.500 10.500H1Z" fill="#fff" /><path d="M9.500 5.500Q11 8 9.500 10.500M11.500 3.500Q14 8 11.500 12.500M13.500 2Q17 8 13.500 14" fill="none" stroke="#fff" strokeWidth="1.100" /></svg>
        <time className="flex w-[78px] flex-col pl-2 text-center text-[11px] leading-[17px] text-white">
          <span>3:00 PM</span>
          <span>1/1/2022</span>
        </time>
        <button type="button" aria-label="Show desktop" className="h-full w-[15px] border border-[#505e74] bg-linear-to-br from-[#b4c1d4] to-[#5d6b82]" />
      </div>
    </footer>
  );
}

export default function App() {
  return (
    <main className={`relative flex min-h-screen flex-col overflow-hidden text-[12px] leading-[16px] ${UI}`}>
      <Wallpaper />
      <div className="relative flex-1">
        <div className="flex">
          {columns.map((col, i) => (
            <div key={i} className="flex flex-col">
              {col.map((item) => <DesktopIcon key={item.name} item={item} />)}
            </div>
          ))}
        </div>
        <div className="absolute right-[10px] bottom-0">
          <DesktopIcon
            item={{
              name: "bin",
              lines: ["Recycle Bin"],
              art: (
                <g>
                  <path d="M7 3L12 44Q24 50 34 44L42 3Z" fill="#a9c9ee" fillOpacity=".55" stroke="#dcebfa" />
                  <path d="M11 35L13 44Q24 49 33 44L35 34Q30 32 24 34Z" fill="#e0d8d0" />
                  <path d="M14 40Q22 46 33 42" stroke="#8a6a5c" fill="none" />
                  <ellipse cx="24.500" cy="4" rx="17.500" ry="3" fill="#86aedf" stroke="#eef5fc" strokeWidth="1.600" />
                  <path d="M22 10L30 14L38 22M14 30L26 24L38 20" stroke="#3c70b4" opacity=".6" fill="none" />
                </g>
              ),
            }}
          />
        </div>
        <Explorer />
        <ClamWin />
        <SearchPanel />
        <ConnectionBar />
      </div>
      <Taskbar />
    </main>
  );
}
